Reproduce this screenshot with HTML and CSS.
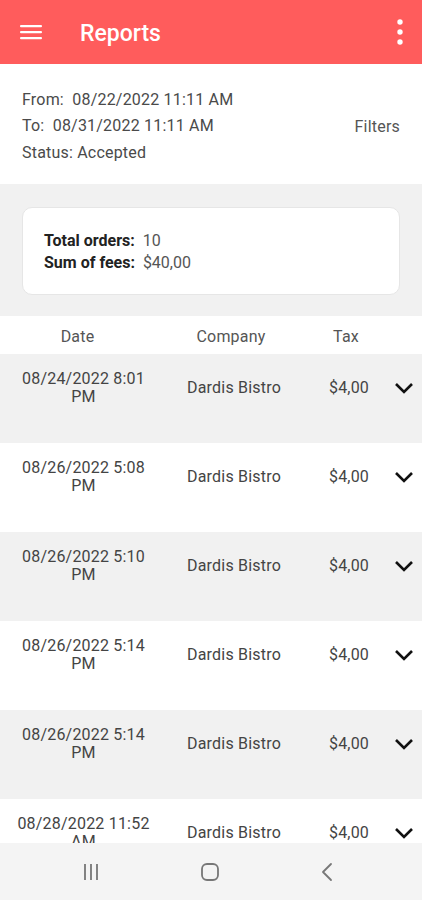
FILE: index.html
```html
<!DOCTYPE html>
<html lang="en">
<head>
  <meta charset="UTF-8">
  <title>Reports</title>
  <meta name="viewport" content="width=device-width, initial-scale=1.0">
  <link rel="stylesheet" href="styles.css">
</head>
<body>
  <div class="screen">
    <header class="appbar">
      <svg class="menu" width="22" height="16" viewBox="0 0 22 16">
        <rect x="0" y="1" width="22" height="2.2" rx="1" fill="#fff"/>
        <rect x="0" y="7" width="22" height="2.2" rx="1" fill="#fff"/>
        <rect x="0" y="13" width="22" height="2.2" rx="1" fill="#fff"/>
      </svg>
      <h1>Reports</h1>
      <svg class="more" width="8" height="26" viewBox="0 0 8 26">
        <circle cx="4" cy="3" r="2.7" fill="#fff"/>
        <circle cx="4" cy="13" r="2.7" fill="#fff"/>
        <circle cx="4" cy="23" r="2.7" fill="#fff"/>
      </svg>
    </header>

    <section class="filtros">
      <div class="rango">
        <div>From:&nbsp; 08/22/2022 11:11 AM</div>
        <div>To:&nbsp; 08/31/2022 11:11 AM</div>
        <div>Status: Accepted</div>
      </div>
      <div class="filters-link">Filters</div>
    </section>

    <section class="resumen">
      <div class="tarjeta">
        <div><strong>Total orders:</strong>&nbsp; 10</div>
        <div><strong>Sum of fees:</strong>&nbsp; $40,00</div>
      </div>
    </section>

    <div class="tabla-head">
      <div>Date</div>
      <div>Company</div>
      <div>Tax</div>
      <div></div>
    </div>

    <div class="lista" id="lista"></div>

    <nav class="sysnav">
      <svg width="18" height="18" viewBox="0 0 18 18">
        <path d="M3 1v16M9 1v16M15 1v16" stroke="#777" stroke-width="1.8" fill="none"/>
      </svg>
      <svg width="20" height="20" viewBox="0 0 20 20">
        <rect x="2" y="2" width="16" height="16" rx="5" stroke="#777" stroke-width="1.8" fill="none"/>
      </svg>
      <svg width="14" height="20" viewBox="0 0 14 20">
        <path d="M11 2 3 10l8 8" stroke="#777" stroke-width="1.8" fill="none" stroke-linecap="round" stroke-linejoin="round"/>
      </svg>
    </nav>
  </div>

  <script>
    const ordenes = [
      { fecha: '08/24/2022 8:01 PM', empresa: 'Dardis Bistro', tax: '$4,00' },
      { fecha: '08/26/2022 5:08 PM', empresa: 'Dardis Bistro', tax: '$4,00' },
      { fecha: '08/26/2022 5:10 PM', empresa: 'Dardis Bistro', tax: '$4,00' },
      { fecha: '08/26/2022 5:14 PM', empresa: 'Dardis Bistro', tax: '$4,00' },
      { fecha: '08/26/2022 5:14 PM', empresa: 'Dardis Bistro', tax: '$4,00' },
      { fecha: '08/28/2022 11:52 AM', empresa: 'Dardis Bistro', tax: '$4,00' }
    ];

    const lista = document.getElementById('lista');
    const chevron = '<svg width="20" height="14" viewBox="0 0 20 14"><path d="M2 3l8 8 8-8" stroke="#111" stroke-width="2.6" fill="none"/></svg>';

    ordenes.forEach(o => {
      const fila = document.createElement('div');
      fila.className = 'fila';
      fila.innerHTML = `
        <div class="celda fecha">${o.fecha}</div>
        <div class="celda">${o.empresa}</div>
        <div class="celda">${o.tax}</div>
        <div class="celda">${chevron}</div>
      `;
      lista.appendChild(fila);
    });
  </script>
</body>
</html>
```

FILE: styles.css
```css
body {
  margin: 0;
  font-family: Roboto, "Noto Sans", sans-serif;
  color: #444;
  background: #fff;
}
.screen {
  width: 422px;
  height: 900px;
  display: flex;
  flex-direction: column;
  overflow: hidden;
}
.appbar {
  height: 64px;
  flex-shrink: 0;
  background: #ff5c5c;
  display: flex;
  align-items: center;
  padding: 0 20px;
}
.appbar h1 {
  margin: 2px 0 0 38px;
  flex: 1;
  color: #fff;
  font-size: 23px;
  font-weight: 500;
}
.appbar .more {
  margin-right: -2px;
}
.filtros {
  height: 120px;
  flex-shrink: 0;
  box-sizing: border-box;
  padding: 5px 22px 0;
  display: flex;
  align-items: center;
  justify-content: space-between;
  font-size: 16px;
  letter-spacing: 0.2px;
  color: #4a4a4a;
}
.rango div {
  line-height: 26.5px;
}
.filters-link {
  color: #555;
}
.resumen {
  background: #f1f1f1;
  padding: 23px 22px 21px;
  flex-shrink: 0;
}
.tarjeta {
  background: #fff;
  border: 1px solid #e6e6e6;
  border-radius: 10px;
  height: 88px;
  box-sizing: border-box;
  padding: 22px 21px 0;
  font-size: 16px;
  line-height: 22px;
  color: #555;
}
.tarjeta strong {
  color: #222;
  font-weight: 700;
}
.tabla-head,
.fila {
  display: grid;
  flex-shrink: 0;
}
.tabla-head {
  grid-template-columns: 155px 152px 78px 37px;
  height: 38px;
  box-sizing: border-box;
  padding-top: 3px;
  align-items: center;
  text-align: center;
  font-size: 16px;
  letter-spacing: 0.2px;
  color: #555;
}
.lista {
  flex: 1;
  overflow: hidden;
}
.fila {
  grid-template-columns: 155px 158px 72px 37px;
  height: 89px;
  box-sizing: border-box;
  padding-top: 16px;
  align-items: start;
  font-size: 16px;
  letter-spacing: 0.2px;
  color: #444;
}
.fila:nth-child(odd) {
  background: #f1f1f1;
}
.celda {
  height: 36px;
  display: flex;
  align-items: center;
  justify-content: center;
  text-align: center;
  line-height: 18px;
}
.celda.fecha {
  padding: 0 0 0 12px;
}
.sysnav {
  height: 57px;
  flex-shrink: 0;
  background: #f4f4f4;
  display: flex;
  align-items: center;
  justify-content: space-between;
  padding: 0 88px 0 82px;
}
```
